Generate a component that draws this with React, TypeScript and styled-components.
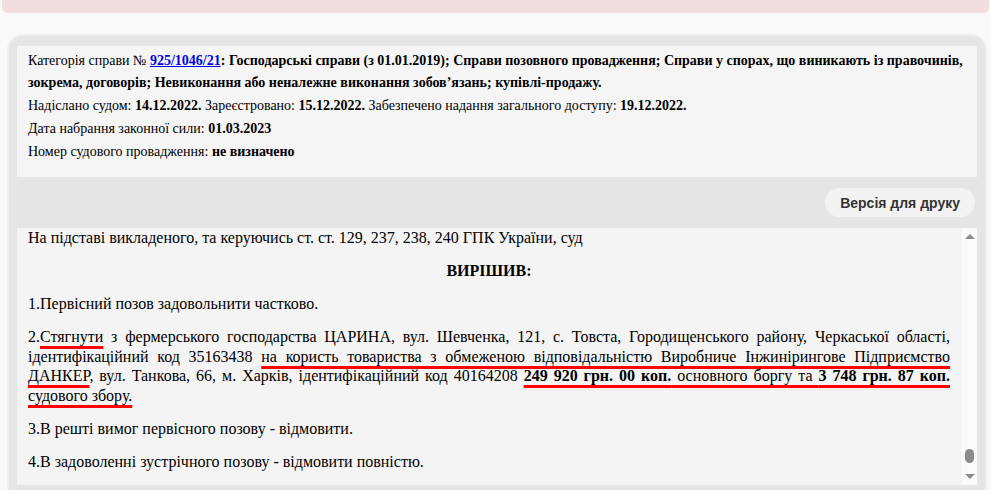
import { useEffect, useRef } from "react";
import styled, { createGlobalStyle } from "styled-components";

const GlobalStyle = createGlobalStyle`
  html, body {
    margin: 0;
    padding: 0;
    background: #f9f9f9;
    overflow: hidden;
  }
`;

const Page = styled.div`
  width: 991px;
  height: 490px;
  overflow: hidden;
`;

const Alert = styled.div`
  height: 13px;
  margin: 0 2px;
  background: #f2dede;
  border-radius: 0 0 5px 5px;
`;

const Card = styled.section`
  margin: 21px 4px 0 7px;
  padding: 10px 8px 10px;
  background: #e5e5e5;
  border: 2px solid #eeeeee;
  border-bottom: none;
  border-radius: 16px 16px 0 0;
`;

const Info = styled.div`
  background: #f5f5f5;
  padding: 4px 11px 14px;
  font-family: "Liberation Serif", "Times New Roman", serif;
  font-size: 14px;
  color: #000;
`;

const InfoRow = styled.div<{ $lh?: number }>`
  line-height: ${(p) => p.$lh ?? 23}px;
`;

const CaseLink = styled.a`
  color: #0000ee;
  font-weight: bold;
  text-decoration: underline;
`;

const Toolbar = styled.div`
  display: flex;
  justify-content: flex-end;
  padding: 11px 2px 11px 0;
`;

const PrintButton = styled.button`
  height: 29px;
  padding: 0 15px;
  border: none;
  border-radius: 15px;
  background: #f3f3f3;
  color: #333;
  font-family: "Liberation Sans", Arial, sans-serif;
  font-size: 14px;
  font-weight: bold;
  cursor: pointer;
`;

const Document = styled.div`
  display: flex;
  height: 257px;
  background: #f4f4f4;
`;

const DocScroll = styled.div`
  flex: 1;
  min-width: 0;
  overflow-y: auto;
  scrollbar-width: none;
  font-family: "Liberation Serif", "Times New Roman", serif;
  font-size: 16px;
  color: #000;
`;

const DocBody = styled.div`
  padding: 0 12px 0 11px;
`;

const EarlierText = styled.div`
  height: 4200px;
`;

const Para = styled.p<{ $center?: boolean }>`
  margin: 0 0 13.5px;
  line-height: 19.5px;
  text-align: ${(p) => (p.$center ? "center" : "justify")};
  font-weight: ${(p) => (p.$center ? "bold" : "normal")};
`;

const Marked = styled.span`
  text-decoration: underline;
  text-decoration-color: #ff0000;
  text-decoration-thickness: 3px;
  text-underline-offset: 4px;
  text-decoration-skip-ink: none;
`;

const ScrollRail = styled.div`
  width: 15px;
  display: flex;
  flex-direction: column;
  align-items: center;
  background: #fafafa;
`;

const Arrow = styled.div<{ $down?: boolean }>`
  height: 17px;
  width: 15px;
  display: flex;
  align-items: center;
  justify-content: center;

  &::before {
    content: "";
    width: 0;
    height: 0;
    border-left: 5px solid transparent;
    border-right: 5px solid transparent;
    ${(p) => (p.$down ? "border-top" : "border-bottom")}: 5px solid #8b8b8b;
  }
`;

const Track = styled.div`
  flex: 1;
  display: flex;
  flex-direction: column;
  justify-content: flex-end;
  padding-bottom: 5px;
`;

const Thumb = styled.div`
  width: 9px;
  height: 14px;
  border-radius: 5px;
  background: #8b8b8b;
`;

export default function App() {
  const docRef = useRef<HTMLDivElement>(null);

  useEffect(() => {
    const el = docRef.current;
    if (el) el.scrollTop = el.scrollHeight;
  }, []);

  return (
    <Page>
      <GlobalStyle />
      <Alert />
      <Card>
        <Info>
          <InfoRow $lh={22}>
            Категорія справи № <CaseLink href="#">925/1046/21</CaseLink>
            <b>
              : Господарські справи (з 01.01.2019); Справи позовного провадження; Справи у спорах, що
              виникають із правочинів, зокрема, договорів; Невиконання або неналежне виконання
              зобов’язань; купівлі-продажу.
            </b>
          </InfoRow>
          <InfoRow>
            Надіслано судом: <b>14.12.2022.</b> Зареєстровано: <b>15.12.2022.</b> Забезпечено надання
            загального доступу: <b>19.12.2022.</b>
          </InfoRow>
          <InfoRow>
            Дата набрання законної сили: <b>01.03.2023</b>
          </InfoRow>
          <InfoRow>
            Номер судового провадження: <b>не визначено</b>
          </InfoRow>
        </Info>
        <Toolbar>
          <PrintButton type="button">Версія для друку</PrintButton>
        </Toolbar>
        <Document>
          <DocScroll ref={docRef}>
            <DocBody>
              <EarlierText />
              <Para>На підставі викладеного, та керуючись ст. ст. 129, 237, 238, 240 ГПК України, суд</Para>
              <Para $center>ВИРІШИВ:</Para>
              <Para>1.Первісний позов задовольнити частково.</Para>
              <Para>
                2.<Marked>Стягнути</Marked> з фермерського господарства ЦАРИНА, вул. Шевченка, 121, с.
                Товста, Городищенського району, Черкаської області, ідентифікаційний код 35163438{" "}
                <Marked>
                  на користь товариства з обмеженою відповідальністю Виробниче Інжинірингове
                  Підприємство ДАНКЕР
                </Marked>
                , вул. Танкова, 66, м. Харків, ідентифікаційний код 40164208{" "}
                <Marked>
                  <b>249 920 грн. 00 коп.</b> основного боргу та <b>3 748 грн. 87 коп.</b> судового
                  збору.
                </Marked>
              </Para>
              <Para>3.В решті вимог первісного позову - відмовити.</Para>
              <Para>4.В задоволенні зустрічного позову - відмовити повністю.</Para>
            </DocBody>
          </DocScroll>
          <ScrollRail>
            <Arrow />
            <Track>
              <Thumb />
            </Track>
            <Arrow $down />
          </ScrollRail>
        </Document>
      </Card>
    </Page>
  );
}
